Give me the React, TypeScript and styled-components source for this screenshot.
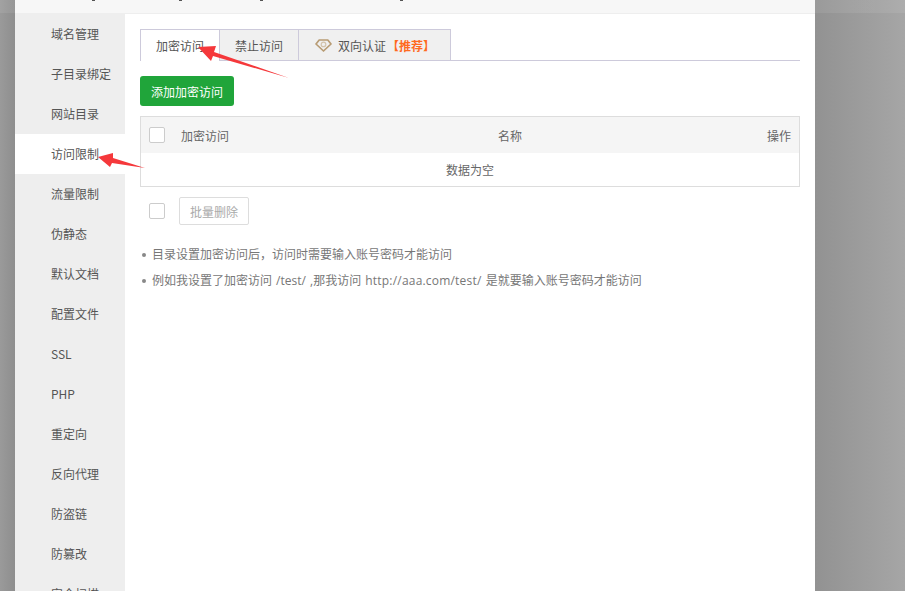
import styled, { createGlobalStyle } from "styled-components";

const GlobalStyle = createGlobalStyle`
    html, body {
        margin: 0;
        padding: 0;
        height: 100%;
        overflow: hidden;
    }
    body {
        font-family: "Noto Sans CJK SC", "Liberation Sans", sans-serif;
        font-size: 12px;
        color: #666;
    }
`;

const menuItems = [
    "域名管理", "子目录绑定", "网站目录", "访问限制", "流量限制", "伪静态", "默认文档", "配置文件",
    "SSL", "PHP", "重定向", "反向代理", "防盗链", "防篡改", "安全扫描", "网站日志",
];

const titleMarks = [77, 84, 78, 137];

const DiamondIcon = () => (
    <svg width="17" height="13" viewBox="0 0 17 13" fill="none">
        <path d="M4.2 1h8.6l3.2 4-7.5 7L1 5z" stroke="#b89c74" strokeWidth="1.7" strokeLinejoin="round" />
        <circle cx="8.5" cy="5.4" r="2.3" stroke="#d3c3aa" strokeWidth="1.2" />
    </svg>
);

const App = () => {
    return (
        <Page>
            <GlobalStyle />
            <Modal>
                <TitleBar>
                    {titleMarks.map((gap, i) => <TitleMark key={i} gap={gap} />)}
                </TitleBar>
                <ModalBody>
                    <Sidebar>
                        {menuItems.map((item) => (
                            <MenuItem key={item} active={item === "访问限制"}>{item}</MenuItem>
                        ))}
                    </Sidebar>
                    <Content>
                        <Tabs>
                            <Tab active width={80}>加密访问</Tab>
                            <Tab width={79}>禁止访问</Tab>
                            <Tab width={152}>
                                <DiamondIcon />
                                <TabLabel>双向认证</TabLabel>
                                <Recommend>【推荐】</Recommend>
                            </Tab>
                        </Tabs>
                        <AddButton>添加加密访问</AddButton>
                        <Table>
                            <TableHead>
                                <Checkbox />
                                <NameCol>加密访问</NameCol>
                                <MiddleCol>名称</MiddleCol>
                                <ActionCol>操作</ActionCol>
                            </TableHead>
                            <EmptyRow>数据为空</EmptyRow>
                        </Table>
                        <BatchBar>
                            <Checkbox />
                            <BatchButton>批量删除</BatchButton>
                        </BatchBar>
                        <Tips>
                            <li>目录设置加密访问后，访问时需要输入账号密码才能访问</li>
                            <li>例如我设置了加密访问 /test/ ,那我访问 <Url>http://aaa.com/test/</Url> 是就要输入账号密码才能访问</li>
                        </Tips>
                    </Content>
                </ModalBody>
            </Modal>
            <Arrows width="905" height="591" viewBox="0 0 905 591">
                <path d="M198 47L216 46L214 52L289 78L213 56L211 61Z" fill="#f5383b" />
                <path d="M98 157L113 153L113 158L145 168L112 163L110 167Z" fill="#f5383b" />
            </Arrows>
        </Page>
    );
};

export default App;

const Page = styled.div`
    position: relative;
    width: 905px;
    height: 591px;
    overflow: hidden;
    padding-left: 15px;
    box-sizing: border-box;
    background:
        linear-gradient(to bottom, rgba(255, 255, 255, 0.08) 13px, transparent 13px),
        linear-gradient(to right, #9a9a9a 0, #8e8e8e 15px, #929292 815px, #a6a6a6 905px);
`;

const Modal = styled.div`
    width: 800px;
    height: 100%;
    background: #fff;
    display: flex;
    flex-direction: column;
`;

const TitleBar = styled.div`
    height: 13px;
    flex-shrink: 0;
    background: #f7f7f7;
    border-bottom: 1px solid #eee;
    display: flex;
    align-items: flex-start;
`;

const TitleMark = styled.span<{ gap: number }>`
    width: 3px;
    height: 1px;
    background: #555;
    margin-left: ${(props) => props.gap}px;
`;

const ModalBody = styled.div`
    flex: 1;
    display: flex;
    min-height: 0;
`;

const Sidebar = styled.div`
    width: 110px;
    flex-shrink: 0;
    background: #eee;
    overflow: hidden;
`;

const MenuItem = styled.div<{ active?: boolean }>`
    height: 40px;
    line-height: 40px;
    padding-left: 36px;
    color: #555;
    background: ${(props) => (props.active ? "#fff" : "transparent")};
`;

const Content = styled.div`
    flex: 1;
    padding: 15px 15px 0;
`;

const Tabs = styled.div`
    display: flex;
    height: 31px;
    border-bottom: 1px solid #cdcadb;
`;

const Tab = styled.div<{ active?: boolean; width: number }>`
    width: ${(props) => props.width}px;
    height: ${(props) => (props.active ? "32px" : "31px")};
    box-sizing: border-box;
    display: flex;
    align-items: center;
    justify-content: center;
    gap: 5px;
    color: #555;
    background: ${(props) => (props.active ? "#fff" : "#f0f0f0")};
    border: 1px solid #cdcadb;
    border-bottom: 0;
    border-left-width: ${(props) => (props.active ? "1px" : "0")};
`;

const TabLabel = styled.span`
    margin-left: 1px;
`;

const Recommend = styled.span`
    color: #ff6a1f;
    font-weight: 700;
    margin: 0 -1px 0 -4px;
`;

const AddButton = styled.button`
    display: block;
    width: 94px;
    height: 30px;
    margin-top: 15px;
    padding: 0;
    font: inherit;
    color: #fff;
    background: #20a53a;
    border: 0;
    border-radius: 3px;
`;

const Table = styled.div`
    margin-top: 10px;
    border: 1px solid #ddd;
`;

const TableHead = styled.div`
    height: 36px;
    display: flex;
    align-items: center;
    padding: 0 8px;
    background: #f5f5f5;
    color: #666;
`;

const Checkbox = styled.span`
    display: block;
    width: 16px;
    height: 16px;
    box-sizing: border-box;
    flex-shrink: 0;
    background: #fff;
    border: 1px solid #ccc;
    border-radius: 2px;
`;

const NameCol = styled.span`
    margin-left: 16px;
    width: 317px;
`;

const MiddleCol = styled.span`
    flex: 1;
`;

const ActionCol = styled.span``;

const EmptyRow = styled.div`
    height: 33px;
    line-height: 33px;
    text-align: center;
    color: #666;
`;

const BatchBar = styled.div`
    display: flex;
    align-items: center;
    gap: 14px;
    margin-top: 10px;
    padding-left: 9px;
`;

const BatchButton = styled.button`
    width: 70px;
    height: 28px;
    padding: 0;
    font: inherit;
    color: #aaa;
    background: #fff;
    border: 1px solid #ddd;
    border-radius: 2px;
`;

const Tips = styled.ul`
    list-style: none;
    margin: 17px 0 0;
    padding: 0 0 0 12px;
    font-family: "Open Sans", "Noto Sans CJK SC", sans-serif;
    word-spacing: 1px;
    color: #777;

    li {
        position: relative;
        height: 26px;
        line-height: 26px;
    }

    li::before {
        content: "";
        position: absolute;
        left: -10px;
        top: 11px;
        width: 4px;
        height: 4px;
        border-radius: 50%;
        background: #888;
    }
`;

const Url = styled.span`
    letter-spacing: 0.2px;
`;

const Arrows = styled.svg`
    position: absolute;
    left: 0;
    top: 0;
    pointer-events: none;
`;
